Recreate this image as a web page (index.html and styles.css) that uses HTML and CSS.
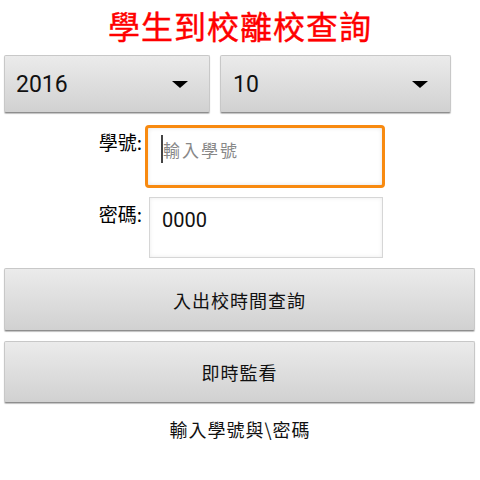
FILE: index.html
```html
<!DOCTYPE html>
<html lang="zh-Hant">
<head>
<meta charset="utf-8">
<title>學生到校離校查詢</title>
<link rel="stylesheet" href="styles.css">
</head>
<body>
<div class="app">
  <h1 class="title">學生到校離校查詢</h1>
  <div class="spinners">
    <div class="spinner spinner-year"><span class="spinner-text">2016</span><span class="arrow"></span></div>
    <div class="spinner spinner-month"><span class="spinner-text">10</span><span class="arrow"></span></div>
  </div>
  <div class="field-row row-id">
    <div class="label">學號:</div>
    <div class="input input-focused"><span class="cursor"></span><span class="placeholder">輸入學號</span></div>
  </div>
  <div class="field-row row-pw">
    <div class="label">密碼:</div>
    <div class="input input-plain"><span class="value">0000</span></div>
  </div>
  <div class="button btn-query">入出校時間查詢</div>
  <div class="button btn-watch">即時監看</div>
  <div class="status">輸入學號與\密碼</div>
</div>
</body>
</html>
```
FILE: styles.css
```css
html, body {
  margin: 0;
  padding: 0;
  background: #ffffff;
}
body {
  font-family: "Noto Sans CJK TC", "Noto Sans", sans-serif;
  color: #111;
}
.app {
  display: flex;
  flex-direction: column;
  width: 480px;
}
.title {
  margin: 0;
  height: 55px;
  box-sizing: border-box;
  padding-top: 3px;
  font-size: 32px;
  line-height: 44px;
  font-weight: 400;
  letter-spacing: 1px;
  text-align: center;
  color: #ff0000;
  -webkit-text-stroke: 0.4px #ff0000;
}
.spinners {
  display: flex;
  gap: 10px;
  padding-left: 4px;
  height: 59px;
}
.spinner {
  box-sizing: border-box;
  height: 58px;
  display: flex;
  align-items: center;
  justify-content: space-between;
  background: linear-gradient(#ebebeb, #d1d1d1);
  border: 1px solid #c8c8c8;
  border-bottom-color: #8e8e8e;
  border-radius: 2px;
  box-shadow: 0 1px 1px rgba(0,0,0,0.25);
}
.spinner-year {
  width: 206px;
  padding: 0 21px 0 11px;
}
.spinner-month {
  width: 231px;
  padding: 0 22px 0 12px;
}
.spinner-text {
  font-family: Roboto, "Noto Sans", sans-serif;
  font-size: 23px;
  color: #111;
}
.arrow {
  width: 0;
  height: 0;
  border-left: 8px solid transparent;
  border-right: 8px solid transparent;
  border-top: 7px solid #000;
}
.field-row {
  display: flex;
  align-items: flex-start;
}
.row-id {
  margin-top: 11px;
}
.row-pw {
  margin-top: 9px;
}
.label {
  width: 142px;
  text-align: right;
  font-size: 19px;
  line-height: 26px;
  padding-top: 4px;
  color: #000;
}
.input {
  box-sizing: border-box;
  background: #fff;
  display: flex;
  align-items: flex-start;
}
.input-focused {
  margin-left: 3px;
  width: 240px;
  height: 63px;
  border: 3px solid #f88a10;
  border-radius: 4px;
  box-shadow: inset 0 0 4px rgba(0,0,0,0.12);
  padding: 7px 0 0 13px;
}
.cursor {
  width: 2px;
  height: 28px;
  background: #444;
}
.placeholder {
  font-size: 17px;
  line-height: 26px;
  letter-spacing: 2px;
  color: #888;
  margin-top: 2px;
}
.input-plain {
  margin-left: 7px;
  width: 234px;
  height: 61px;
  border: 1px solid #d6d6d6;
  box-shadow: inset 0 0 4px rgba(0,0,0,0.08);
  padding: 9px 0 0 12px;
}
.value {
  font-family: Roboto, "Noto Sans", sans-serif;
  font-size: 20px;
  line-height: 26px;
  color: #111;
}
.button {
  box-sizing: border-box;
  margin-left: 4px;
  width: 471px;
  display: flex;
  align-items: center;
  justify-content: center;
  font-size: 18px;
  letter-spacing: 1px;
  color: #111;
  background: linear-gradient(#ebebeb, #d1d1d1);
  border: 1px solid #c8c8c8;
  border-bottom-color: #8e8e8e;
  border-radius: 2px;
  box-shadow: 0 1px 1px rgba(0,0,0,0.25);
}
.btn-query {
  margin-top: 10px;
  height: 63px;
}
.btn-watch {
  margin-top: 10px;
  height: 62px;
}
.status {
  margin-top: 13px;
  text-align: center;
  font-size: 18px;
  line-height: 26px;
  letter-spacing: 1px;
  color: #111;
}
```
